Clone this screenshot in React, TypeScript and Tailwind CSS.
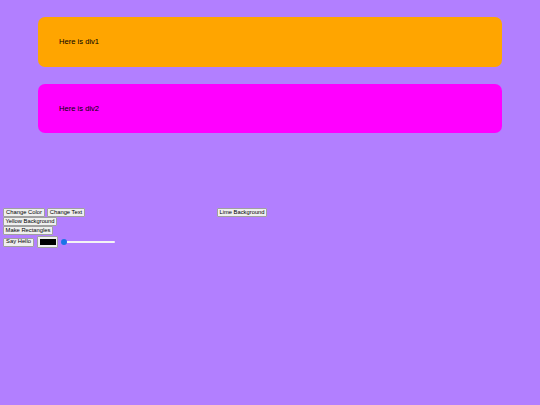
import { useState } from "react";

const btn =
  "h-[9px] px-[2px] bg-[#efefef] border border-[#a0a0a0] rounded-[1px] text-[5.8px] leading-none text-black flex items-center justify-center whitespace-nowrap";

export default function App() {
  const [val] = useState(0);

  return (
    <div className="w-[540px] h-[405px] bg-[#b27fff] font-['Liberation_Sans',Arial,sans-serif] overflow-hidden">
      {/* two colored boxes */}
      <div className="pt-[17px] px-[38px] flex flex-col gap-[17px]">
        <div className="h-[50px] bg-[#ffa500] rounded-[7px] flex items-center pl-[21px] text-[7.6px] text-black">
          Here is div1
        </div>
        <div className="h-[49px] bg-[#ff00ff] rounded-[7px] flex items-center pl-[21px] text-[7.6px] text-black">
          Here is div2
        </div>
      </div>

      {/* controls */}
      <div className="mt-[75px] pl-[3px] flex flex-col">
        <div className="flex items-center">
          <button className={btn + " w-[42px]"}>Change Color</button>
          <button className={btn + " ml-[2px] w-[38px]"}>Change Text</button>
          <button className={btn + " ml-[132px] w-[50px]"}>Lime Background</button>
        </div>
        <div className="flex">
          <button className={btn + " w-[54px]"}>Yellow Background</button>
        </div>
        <div className="flex">
          <button className={btn + " w-[50px]"}>Make Rectangles</button>
        </div>
        <div className="flex items-center mt-[1px]">
          <button className={btn + " w-[31px]"}>Say Hello</button>
          <div className="ml-[3px] w-[21px] h-[12px] bg-[#efefef] border border-[#a0a0a0] rounded-[1px] flex items-center justify-center">
            <div className="w-[16px] h-[6px] bg-black" />
          </div>
          {/* range slider */}
          <div className="ml-[3px] relative w-[54px] h-[10px] flex items-center">
            <div className="w-full h-[2px] bg-[#f4f4f4] rounded-full" />
            <div
              className="absolute top-1/2 -translate-y-1/2 w-[6px] h-[6px] rounded-full bg-[#1a73e8]"
              style={{ left: `${val}%` }}
            />
          </div>
        </div>
      </div>
    </div>
  );
}
